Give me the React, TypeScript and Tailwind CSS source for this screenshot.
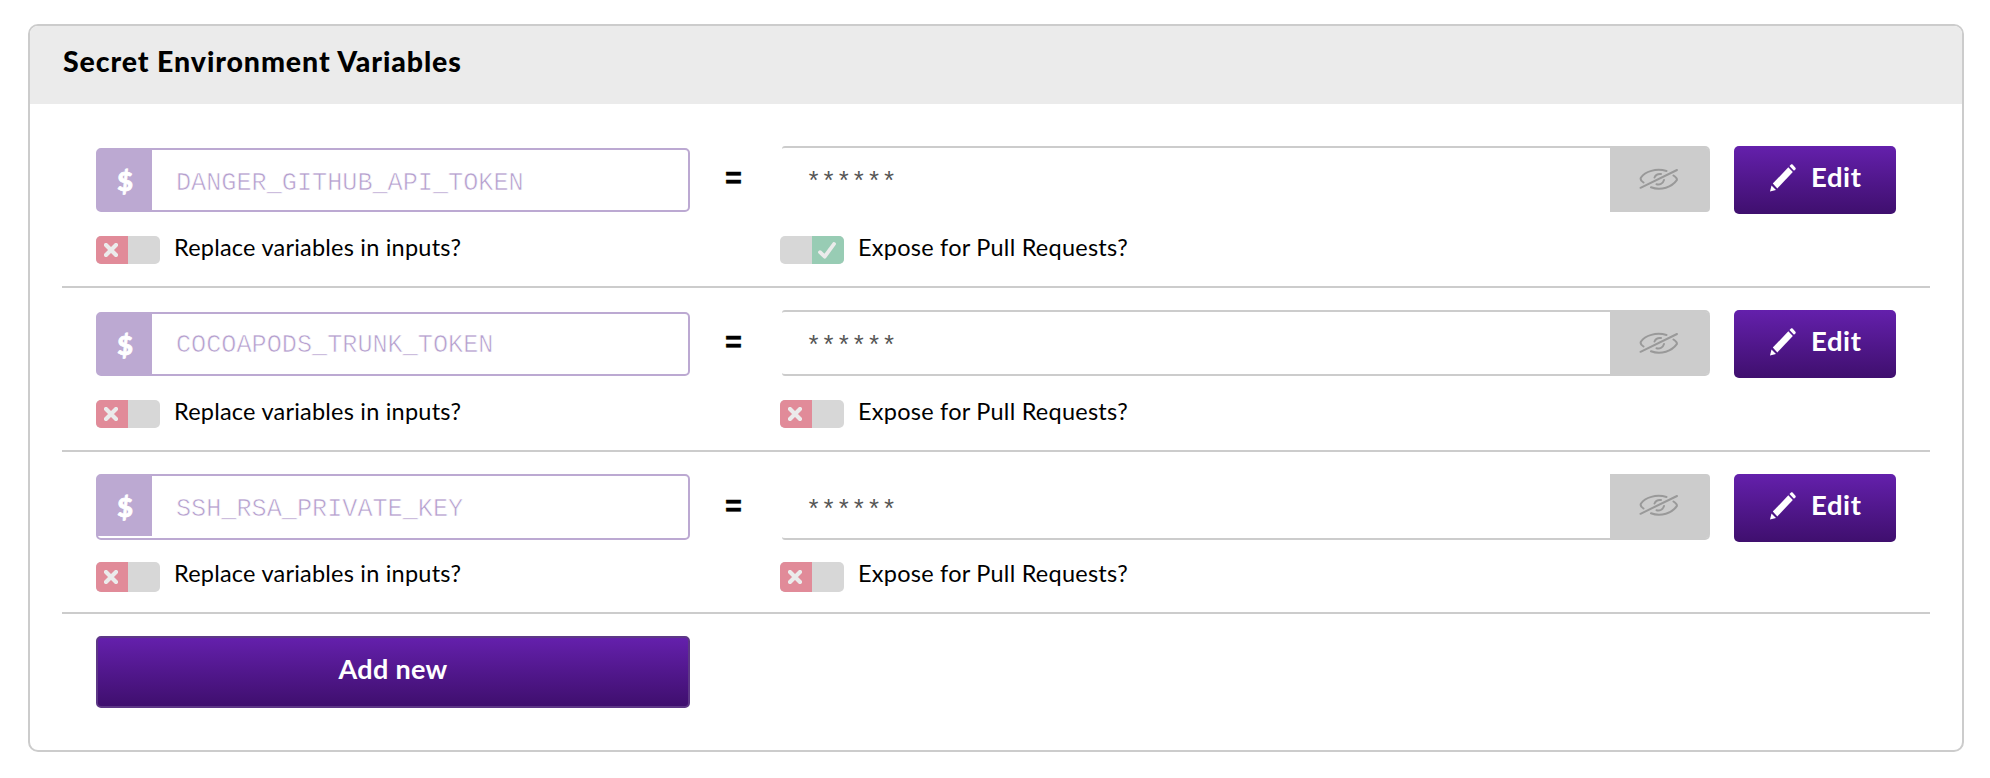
import React from "react";

type Row = {
  name: string;
  expose: boolean;
  box: string;
  field: string;
  text: string;
  value: string;
  stars: string;
  toggles: string;
  toggleHeight: string;
};

const rows: Row[] = [
  {
    name: "DANGER_GITHUB_API_TOKEN",
    expose: true,
    box: "h-[184px] pt-[42px]",
    field: "mt-[2px] h-[64px]",
    text: "pt-[7px]",
    value: "border-t-2",
    stars: "pt-[17px]",
    toggles: "mt-[24px]",
    toggleHeight: "h-[28px]",
  },
  {
    name: "COCOAPODS_TRUNK_TOKEN",
    expose: false,
    box: "h-[164px] pt-[22px]",
    field: "mt-[2px] h-[64px]",
    text: "pt-[3px]",
    value: "border-y-2",
    stars: "pt-[17px]",
    toggles: "mt-[24px]",
    toggleHeight: "h-[28px]",
  },
  {
    name: "SSH_RSA_PRIVATE_KEY",
    expose: false,
    box: "h-[162px] pt-[22px]",
    field: "h-[66px]",
    text: "pt-[7px]",
    value: "border-b-2",
    stars: "pt-[19px]",
    toggles: "mt-[22px]",
    toggleHeight: "h-[30px]",
  },
];

function HiddenEye() {
  return (
    <svg viewBox="0 0 40 23" className="mt-[20px] mr-[2px] h-[23px] w-[40px]" fill="none" stroke="#999" strokeWidth="2" strokeLinecap="round">
      <path d="M27.500 3C17 0 6 3.500 2 9.500c-.8 1.500 0 3.500 2.500 5" />
      <path d="M34.500 7.500c2.500 1.500 3.800 3.200 3.300 4.700C33 19 22 23 12 19.300" />
      <path d="M15.500 9.500c1-2.500 3.500-3.800 6.500-3.500M17.500 16.200c3.500 1 6.500-1 7.500-4.200" />
      <path d="M1.500 19.800L38 2" />
    </svg>
  );
}

function Pencil() {
  return (
    <svg viewBox="0 0 26 28" className="h-[28px] w-[26px]" fill="#fff">
      <path d="M0 27.500L1.500 21.500L6 26z" />
      <path d="M2.800 19.600L18.300 3.300L22.800 8L7.300 24.400z" />
      <path d="M19.500 2L21.300 .3Q22 0 22.600.6L25.600 3.900Q26 4.600 25.500 5.200L24 6.700z" />
    </svg>
  );
}

function Toggle({ on, height }: { on: boolean; height: string }) {
  return (
    <div className={`flex w-[64px] overflow-hidden rounded-[5px] bg-[#d7d7d7] ${height} ${on ? "justify-end" : ""}`}>
      <div className={`flex w-[32px] items-center justify-center ${on ? "bg-[#98ccb4]" : "bg-[#e18b99]"}`}>
        {on ? (
          <svg viewBox="0 0 18 17" className="mr-[2px] h-[17px] w-[18px]" fill="none" stroke="#ebebeb" strokeWidth="3.800" strokeLinecap="round" strokeLinejoin="round">
            <path d="M2 10.200L6.700 14.700L16 2" />
          </svg>
        ) : (
          <svg viewBox="0 0 14 14" className="mr-[2px] h-[14px] w-[14px]" fill="none" stroke="#ebebeb" strokeWidth="4.200" strokeLinecap="round">
            <path d="M2 2L12 12M12 2L2 12" />
          </svg>
        )}
      </div>
    </div>
  );
}

function VariableRow({ row }: { row: Row }) {
  return (
    <div className={`border-b-2 border-[#ccc] pl-[34px] ${row.box}`}>
      <div className="flex h-[66px] items-start">
        <div className={`flex w-[594px] rounded-[5px] border-2 border-[#bca9d2] ${row.field}`}>
          <div className="flex h-[60px] w-[54px] items-center justify-center bg-[#bca9d2] text-[27px] leading-none font-black text-white [-webkit-text-stroke:0.8px_white]">$</div>
          <div className={`flex h-[60px] items-center pl-[24px] font-['Liberation_Mono',monospace] text-[25.2px] text-[#b59fce] [-webkit-text-stroke:0.6px_white] ${row.text}`}>{row.name}</div>
        </div>
        <div className="flex h-[66px] w-[92px] items-center pl-[35px] font-['Liberation_Sans',sans-serif] text-[29px] font-bold [-webkit-text-stroke:0.4px_black]">=</div>
        <div className={`flex h-[66px] w-[928px] rounded-l-[3px] rounded-r-[5px] border-[#ccc] ${row.value}`}>
          <div className={`flex-1 pl-[24px] font-['Liberation_Mono',monospace] text-[25.2px] text-[#555] ${row.stars}`}>******</div>
          <div className="flex w-[100px] justify-center rounded-r-[4px] bg-[#ccc]">
            <HiddenEye />
          </div>
        </div>
        <button className="ml-[24px] flex h-[68px] w-[162px] rounded-[5px] bg-linear-to-b from-[#6420ac] to-[#3f0f6e] pt-[18px] pl-[36px] text-white">
          <Pencil />
          <span className="-mt-px ml-[15px] text-[27.5px] leading-[28px] font-bold tracking-[0.6px]">Edit</span>
        </button>
      </div>
      <div className={`flex ${row.toggles}`}>
        <div className="flex w-[684px]">
          <Toggle on={false} height={row.toggleHeight} />
          <span className="ml-[14px] text-[23.5px] leading-[23px] tracking-[0.22px]">Replace variables in inputs?</span>
        </div>
        <div className="flex">
          <Toggle on={row.expose} height={row.toggleHeight} />
          <span className="ml-[14px] text-[23.5px] leading-[23px] tracking-[0.24px]">Expose for Pull Requests?</span>
        </div>
      </div>
    </div>
  );
}

export default function App() {
  return (
    <main className="h-[778px] bg-white pt-[24px] pr-[26px] pl-[28px] font-[Lato,sans-serif] text-black">
      <section className="h-[728px] overflow-hidden rounded-[10px] border-2 border-[#ccc] bg-white">
        <h2 className="h-[78px] bg-[#ebebeb] pt-[17px] pl-[33px] text-[28.5px] leading-[37px] font-black tracking-[0.9px]">Secret Environment Variables</h2>
        <div className="px-[32px]">
          {rows.map((row) => (
            <VariableRow key={row.name} row={row} />
          ))}
          <div className="pt-[22px] pl-[34px]">
            <button className="flex h-[72px] w-[594px] justify-center rounded-[5px] border-2 border-[#5d3786] bg-linear-to-b from-[#6420ac] to-[#3f0f6e] pt-[15px] text-[27px] leading-[32px] font-bold tracking-[0.3px] text-white">Add new</button>
          </div>
        </div>
      </section>
    </main>
  );
}
